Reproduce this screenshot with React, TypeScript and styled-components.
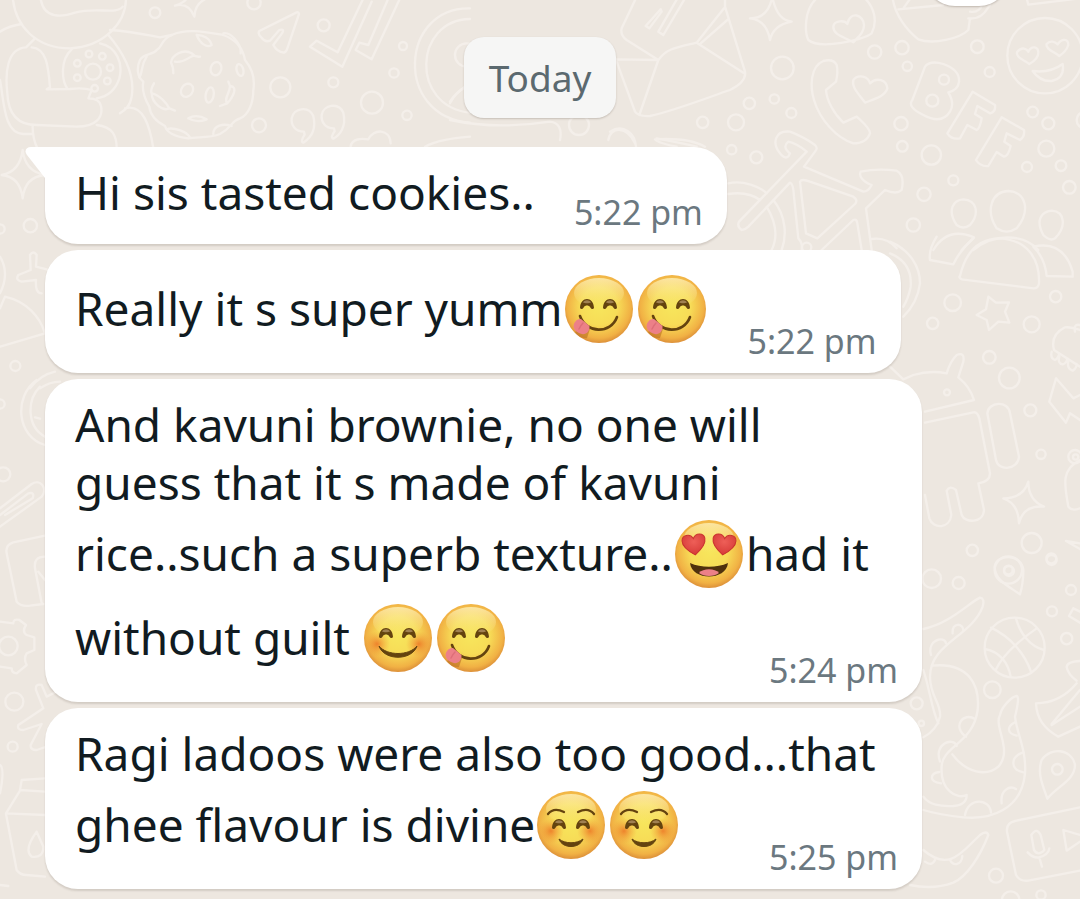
import React from 'react';
import styled, { createGlobalStyle } from 'styled-components';

const GlobalStyle = createGlobalStyle`
  body {
    margin: 0;
    background: #ede7e0;
    font-family: "Noto Sans", "Open Sans", sans-serif;
  }
`;

const Page = styled.main`
  position: relative;
  box-sizing: border-box;
  min-height: 100vh;
  padding: 37px 158px 10px 45px;
  overflow: hidden;
`;

const WallpaperArt = styled.svg`
  position: absolute;
  inset: 0;
  width: 100%;
  height: 100%;
  fill: none;
  stroke: #f4efea;
  stroke-width: 7;
  stroke-linecap: round;
  stroke-linejoin: round;
`;

const ReactionPill = styled.div`
  position: absolute;
  top: -54px;
  right: 71px;
  width: 84px;
  height: 60px;
  border-radius: 30px;
  background: #fff;
  box-shadow: 0 1px 2px rgba(60, 45, 30, 0.25);
`;

const DayRow = styled.header`
  position: relative;
  display: flex;
  justify-content: center;
  margin: 0 -158px 29px -45px;
`;

const DayChip = styled.time`
  padding: 0 25px;
  border-radius: 20px;
  background: #f6f6f5;
  color: #5b696f;
  font-size: 37px;
  line-height: 81px;
  box-shadow: 0 1px 2px rgba(60, 45, 30, 0.22);
`;

const MessageList = styled.ol`
  position: relative;
  display: flex;
  flex-direction: column;
  align-items: flex-start;
  gap: 6px;
  margin: 0;
  padding: 0;
  list-style: none;
`;

const Bubble = styled.li<{ $first?: boolean }>`
  position: relative;
  display: flex;
  flex-direction: column;
  box-sizing: border-box;
  max-width: 100%;
  padding: 16px 24px 12px 30px;
  border-radius: ${(p) => (p.$first ? '0 33px 33px 33px' : '33px')};
  background: #fff;
  box-shadow: 0 2px 2px rgba(60, 45, 30, 0.14);
`;

const Tail = styled.svg`
  position: absolute;
  top: 0;
  left: -20px;
  width: 21px;
  height: 32px;
  fill: #fff;
`;

const MessageText = styled.p`
  margin: 0;
  color: #111b21;
  font-size: 46px;
  line-height: 58px;
`;

const TimeSpace = styled.span`
  display: inline-block;
  width: 168px;
`;

const SentAt = styled.time`
  align-self: flex-end;
  margin-top: -29px;
  color: #6b7880;
  font-size: 34px;
  line-height: 40px;
`;

const Face = styled.svg`
  width: 73px;
  height: 70px;
  margin: 8px 0 6px;
  vertical-align: -24px;
`;

type FaceKind = 'yum' | 'love' | 'blush' | 'calm';

const faceLabels: Record<FaceKind, string> = {
  yum: '😋',
  love: '😍',
  blush: '😊',
  calm: '☺️',
};

const SmilingEye = ({ x, y }: { x: number; y: number }) => (
  <g transform={`translate(${x} ${y})`}>
    <path d="M-7 4C-6.500-8 6.500-8 7 4C6 6 4 5 3 3C2 1-2 1-3 3C-4 5-6 6-7 4Z" fill="#64430f" />
    <path d="M-4-1.500C-2.500-4.500 2.500-4.500 4-1.500C2-.5-2-.5-4-1.500Z" fill="#a08052" />
  </g>
);

const Heart = ({ x, y, turn }: { x: number; y: number; turn: number }) => (
  <path
    transform={`translate(${x} ${y}) rotate(${turn})`}
    d="M0 11C-7 6-12 1-11.500-4.500C-11-10-3-11.500 0-5.500C3-11.500 11-10 11.500-4.500C12 1 7 6 0 11Z"
    fill="url(#heartRed)"
    stroke="#c9332f"
    strokeWidth="1"
  />
);

const Emoji = ({ kind }: { kind: FaceKind }) => (
  <Face viewBox="0 0 73 70" role="img" aria-label={faceLabels[kind]}>
    <circle cx="36" cy="35" r="34" fill="url(#faceSkin)" />
    <ellipse cx="36" cy="19" rx="25" ry="15" fill="url(#faceShine)" />
    {(kind === 'blush' || kind === 'calm') && (
      <>
        <circle cx={kind === 'blush' ? 15 : 16} cy="41" r="13" fill="url(#cheek)" />
        <circle cx={kind === 'blush' ? 57 : 55} cy="41" r="13" fill="url(#cheek)" />
      </>
    )}
    {kind === 'yum' && (
      <>
        <SmilingEye x={24} y={30} />
        <SmilingEye x={47} y={30} />
        <path d="M17 42C23 60 48 60 54 43" fill="none" stroke="#64430f" strokeWidth="2.600" strokeLinecap="round" />
        <path d="M12 58C14 62 20 65 24 64L27 55L20 52Z" fill="#bf7427" opacity=".65" />
        <path d="M18 45L26.500 52C27 59 21 62 16 59C11 57 9 52 12 48C14 45 16 45 18 45Z" fill="#ec8088" />
        <path d="M20 49C18 51 17 53 16 55" fill="none" stroke="#dd6e79" strokeWidth="1.500" strokeLinecap="round" />
      </>
    )}
    {kind === 'blush' && (
      <>
        <SmilingEye x={24} y={30} />
        <SmilingEye x={47} y={30} />
        <path d="M17 43C25 53 47 53 55 43C50 58 22 58 17 43Z" fill="#64430f" stroke="#64430f" strokeLinejoin="round" />
      </>
    )}
    {kind === 'calm' && (
      <>
        <SmilingEye x={24} y={34} />
        <SmilingEye x={48} y={34} />
        <path d="M13 24C17 19 23 19 29 22M43 22C49 19 55 19 59 24" fill="none" stroke="#64430f" strokeWidth="2.300" strokeLinecap="round" />
        <path d="M24 49C30 54 42 54 48 49C45 59 27 59 24 49Z" fill="#64430f" stroke="#64430f" strokeLinejoin="round" />
      </>
    )}
    {kind === 'love' && (
      <>
        <Heart x={21} y={25} turn={-7} />
        <Heart x={51} y={25} turn={7} />
        <path d="M17 44C28 49 44 49 55 44C53 62 19 62 17 44Z" fill="#4f310d" />
        <path d="M26 54C30 49 42 49 46 54C41 58 31 58 26 54Z" fill="#ec8088" />
      </>
    )}
  </Face>
);

type Dot = [number, number, number];

const Dots = ({ at }: { at: Dot[] }) => (
  <>
    {at.map(([x, y, r]) => (
      <circle key={`${x}-${y}`} cx={x} cy={y} r={r} />
    ))}
  </>
);

const Wallpaper = () => (
  <WallpaperArt viewBox="0 0 1080 899" preserveAspectRatio="xMidYMin slice" aria-hidden="true">
    <defs>
      <radialGradient id="faceSkin" cx=".5" cy=".46" r=".55">
        <stop offset="0" stopColor="#f7e65c" />
        <stop offset=".5" stopColor="#f7dc57" />
        <stop offset=".85" stopColor="#f1b144" />
        <stop offset="1" stopColor="#da8c38" />
      </radialGradient>
      <linearGradient id="faceShine" x1="0" y1="0" x2="0" y2="1">
        <stop offset="0" stopColor="#fff3c0" stopOpacity=".75" />
        <stop offset="1" stopColor="#fbe98a" stopOpacity="0" />
      </linearGradient>
      <radialGradient id="cheek">
        <stop offset="0" stopColor="#ec7022" stopOpacity=".8" />
        <stop offset="1" stopColor="#f09a3a" stopOpacity="0" />
      </radialGradient>
      <radialGradient id="heartRed" cx=".5" cy=".35" r=".65">
        <stop offset="0" stopColor="#ee5f58" />
        <stop offset="1" stopColor="#d63a37" />
      </radialGradient>
    </defs>

    {/* astronaut, cookie, paper plane, ticks and quotes */}
    <g transform="scale(.33333)">
      <path d="M38-10C45 80 110 145 210 145C310 140 380 70 378-10M122-5C130 60 190 50 225 38C290 20 350 45 368 20M0 95C20 82 45 75 65 72M105 115L78 142C20 145 15 220 22 280C25 350 60 375 110 375L230 380C290 380 310 350 303 318C300 300 285 295 265 295L275 270Q250 262 210 267L140 268L150 262C145 200 140 145 95 142" />
      <path d="M0 240C12 300 10 400 70 402L98 402M98 375C97 410 105 430 112 445M290 375C340 380 350 410 350 445M325 105C380 170 405 230 395 290C390 320 375 330 360 340M375 325C430 310 450 380 460 445M215 148C180 180 185 240 202 266M300 130C350 140 370 190 358 235C345 275 320 290 290 295M330 90C400 95 440 105 480 112L515 105" />
      <path d="M515 105C560 85 610 95 670 105C710 120 730 150 735 180C760 210 765 240 760 270C760 310 745 345 720 355C690 365 700 380 660 402C630 415 590 410 565 415C520 410 500 395 495 378C460 360 450 340 448 320C430 290 425 270 430 245C410 230 410 200 420 180C430 160 460 165 470 150C490 140 480 120 515 105Z" />
      <path d="M590 105C600 130 620 145 635 135C630 115 610 105 590 105M670 100C690 95 725 130 722 160M440 170C420 200 430 215 418 232M600 170Q585 172 575 160C550 145 515 165 513 188Q520 200 520 220M525 185C550 190 560 175 578 168M462 250Q450 270 455 280C480 285 500 310 508 325L525 332M455 280C455 310 490 335 508 325M685 245L690 258C715 260 700 290 682 310L660 318M690 258C690 280 670 295 682 310M500 388C520 380 560 395 570 412M640 402C640 375 670 370 695 378M565 355Q590 340 620 358Q590 370 565 355" />
      <path d="M525 17C550 10 560 0 570-20M525 17Q565 5 583 50Q585 10 620-5M890 37L778 93Q772 102 784 112Q795 128 810 122L838 90Q855 85 846 100L820 135Q830 155 852 158Q860 155 862 145L897 42Q897 36 890 37ZM1090-5L1013 157L950 122L930 140L1027 200L1115 5M1165-5L1105 135L1078 128L1067 150L1115 178L1200-5" />
      <ellipse cx="648" cy="206" rx="16" ry="20" transform="rotate(15 648 206)" />
      <ellipse cx="561" cy="271" rx="17" ry="21" transform="rotate(35 561 271)" />
      <ellipse cx="629" cy="285" rx="12" ry="23" transform="rotate(10 629 285)" />
      <ellipse cx="720" cy="210" rx="10" ry="18" transform="rotate(-15 720 210)" />
      <path d="M912 395C885 395 873 375 875 355C880 325 925 315 940 348C950 390 930 415 910 428Q900 425 914 404ZM1002 385C975 385 963 365 965 345C970 315 1015 305 1030 338C1040 380 1020 405 1000 416Q990 412 1004 394ZM1052 440C1055 415 1085 415 1105 418C1120 385 1170 385 1172 430M1275 440C1310 420 1360 415 1410 410M1410 25C1200 20 1180 350 1410 368M1410 57C1240 60 1230 320 1410 338M1350 310Q1365 280 1395 262" />
      <Dots at={[[465,38,16],[762,8,20],[971,76,18],[1209,138,12],[1182,219,14],[841,262,30],[1000,247,15],[1116,308,33],[1221,346,14],[777,376,21],[1400,165,35],[279,215,24],[267,162,10],[307,169,10],[232,190,10],[330,203,10],[232,233,10],[322,243,10],[284,265,10]]} />
    </g>

    {/* envelope, phone, lettering, bicycle and people */}
    <g transform="translate(610 0) scale(.33333)">
      <path d="M80-10L35 85Q30 105 50 120L145 180L20 178M20 185L75 335Q85 350 120 348C200 330 300 290 360 270Q410 245 405 215L345 20V-10M145 180C170 145 200 142 260 128L400 218M145 180L88 345M260 128L342 25M272 130L352 60M205-10L145 95L160 105L225-5M152 28L107 78L118 85L155 35ZM420 55Q475 55 487-10Q500 60 545 65Q490 75 480 120Q470 60 420 55Z" />
      <path d="M620-5C580 30 585 100 595 120C630 150 760 120 785 100C805 60 790 20 765-5M730 127C700 110 670 105 670 80C672 60 705 60 712 72C720 30 762 45 762 75C763 100 740 115 730 127ZM848-5C855 45 890 90 925 118C970 135 1050 115 1075 90L1080 55M865 28L1000 15M905-10L882 22M1075 55C1120 60 1130 25 1140 15M1080 35C1105 40 1115 20 1115 15M1250-5L1255 14L1410-5" />
      <path d="M680 195Q670 175 640 183C600 200 600 260 612 300C630 360 680 415 730 430Q770 430 780 400Q780 385 740 350L700 368C670 340 650 300 648 270L678 245Q685 215 680 195ZM765 308C740 275 725 260 730 240C745 220 775 230 780 250C800 230 830 240 832 265C825 290 790 298 765 308Z" />
      <path d="M945 200Q960 180 1000 192Q1050 210 1047 245Q1045 270 1015 277Q1035 310 1020 335Q995 375 940 345Q890 320 907 300ZM1088 275L1155 315Q1158 335 1140 340L1102 318L1095 342L1115 355Q1110 385 1100 390L1072 375L1050 415Q1025 420 1012 400ZM1175 352L1242 390Q1245 410 1230 420L1190 400L1183 425L1202 438Q1195 468 1182 470L1160 456L1135 498Q1110 500 1098 480Z" />
      <circle cx="1305" cy="167" r="113" />
      <path d="M1258 192C1240 180 1215 170 1222 155C1235 140 1250 145 1255 155C1265 135 1285 140 1285 158C1285 175 1270 185 1258 192ZM1348 168C1330 155 1305 145 1310 132C1320 120 1335 125 1343 133C1355 115 1375 115 1375 135C1370 150 1360 160 1348 168ZM1268 213Q1320 220 1358 192Q1365 235 1325 243Q1290 245 1268 213Z" />
      <path d="M0 395C40 370 75 400 78 440M200 440C170 435 140 425 135 418C190 415 250 420 285 440M387 665Q380 680 395 690Q405 690 415 680L540 548Q550 550 552 590L565 715C580 730 575 745 575 750M387 665L590 455Q560 430 535 425Q515 440 540 460Q530 485 510 460C485 430 495 390 540 395Q580 410 615 435Q625 445 615 455L582 500L760 575Q775 575 785 555C760 545 745 530 752 515Q800 505 860 512Q885 525 875 570Q860 585 825 570L768 625L785 750M570 545Q575 535 600 545L730 590Q745 600 735 612L622 715L588 700ZM635 750L730 660Q740 655 742 670L755 750M355 550C400 540 450 560 470 580M355 582C400 575 430 585 450 600M490 600C530 650 530 710 515 750M470 620C500 670 505 710 485 750M785 717Q830 710 860 745" />
      <path d="M1060 598C1100 600 1110 640 1080 675Q1060 690 1040 675C1010 630 1030 600 1060 598ZM1195 573C1245 575 1265 630 1220 685Q1190 705 1160 685C1125 630 1145 575 1195 573ZM1325 632C1365 635 1370 680 1335 715Q1320 725 1300 705C1275 660 1295 635 1325 632ZM970 750C1000 700 1040 690 1092 712L1055 750M1090 750C1150 700 1240 700 1285 750" />
      <Dots at={[[517,204,34],[794,156,20],[876,143,20],[892,199,14],[1102,140,19],[1139,216,15],[1002,239,15],[967,302,18],[418,310,17],[493,297,14],[544,339,15],[278,367,17],[378,367,24],[365,449,14],[439,472,18],[873,371,20],[877,439,16],[964,465,29],[1268,336,16],[1315,370,18],[1309,446,24],[1353,497,16],[1251,501,15],[1030,541,15],[942,583,20],[910,675,20],[1378,562,19],[1425,360,25],[590,742,14]]} />
    </g>

    {/* robot, stars and lightning */}
    <g transform="translate(890 240) scale(.33333)">
      <path d="M140-10Q115 30 120 60L190 73Q210 30 250-5M210 108Q205 112 215 118L430 145Q445 145 447 130C450 55 410 0 330-5C260-5 225 45 210 108ZM430 20Q520 0 548 95V110L470 108Q465 55 430 20ZM0 5C60 30 90 80 90 130C85 170 70 200 40 230M0 40C50 60 65 100 62 140Q55 175 40 200M0 380L40 418L70 405Q120 390 170 400Q180 365 200 345Q225 335 220 365L205 412Q240 440 252 480L105 515M105 548L250 517Q262 515 268 535L300 700Q300 725 265 730L282 810C280 850 225 850 215 825L198 750Q180 735 170 752L184 825C180 865 130 870 118 835L105 765" />
      <path d="M292 520C295 485 355 480 360 520L387 650C385 690 325 695 318 660ZM295 170L318 188L357 187L345 215L358 248L325 245L297 270L290 240L260 225L288 208ZM415 725Q415 780 462 800Q400 795 387 850Q385 790 340 775Q400 775 415 725ZM570 270Q545 260 525 262Q480 285 492 330L570 380M555 275Q550 250 570 255M485 335Q480 355 495 360Q505 355 508 340M508 350Q502 370 518 373Q530 370 532 355M535 365Q530 385 548 392Q560 385 560 372M570 465L550 475L498 415L478 485L528 548L540 520L570 540M570 660C510 690 525 740 535 800Q545 815 570 805M528 903L570 910M528 903L570 927" />
      <Dots at={[[188,188,25],[128,250,17],[425,253,24],[497,170,17],[298,352,19],[358,414,31],[421,511,18],[453,643,14],[247,931,17],[425,909,30],[484,955,15],[171,457,9],[355,990,41],[355,990,13],[555,650,20],[557,651,8]]} />
    </g>

    {/* octopus, ball, pins and camera card */}
    <g transform="translate(890 560) scale(.33333)">
      <path d="M100 207C180 190 235 130 270 113Q285 115 278 140C245 230 120 250 120 350C120 410 155 430 150 470Q140 510 100 532M100 330C120 390 125 450 145 490M125 317C240 305 270 380 263 450C250 550 155 560 155 620C150 690 200 720 230 705Q230 735 190 738C150 740 120 735 100 710M187 583C230 640 290 650 325 620C370 570 310 500 330 465C335 440 365 410 380 408Q390 410 375 470C380 520 410 570 405 640C395 750 300 780 220 772Q150 765 100 750M100 870C180 940 220 870 270 825Q290 810 295 825C270 890 230 950 190 968Q130 990 60 975" />
      <path d="M188 220C185 185 220 190 220 210M123 285C110 240 165 225 168 250M228 530C185 500 220 455 255 477M150 605C130 550 190 530 200 558M153 670C115 665 120 640 148 636M225 765C235 710 300 715 303 758M335 730C330 690 360 675 378 687M400 577C360 590 360 630 400 637M375 487C350 500 350 520 380 527M105 905Q125 920 135 900M180 900C190 920 215 915 217 888" />
      <circle cx="374" cy="263" r="90" />
      <path d="M303 203C360 230 405 280 424 338M378 175C390 220 420 260 462 270M440 205C390 240 340 280 317 330M285 267C330 275 355 310 362 350M390 103C350 75 315 60 314 20C320-20 395-20 400 30Q400 70 390 103ZM472 716C460 680 440 640 455 600C480 560 545 565 555 615C555 660 500 680 472 716ZM570 390L485 492M438 430Q440 495 505 530L570 500M438 430Q510 430 560 370M570 303Q530 305 530 322Q535 345 560 362M570 440L485 495M550 145L570 155M550 145L537 168L570 188M570 742L375 783Q345 790 352 820L378 945Q390 965 415 962L570 932M424 825Q440 800 452 825L463 870Q445 890 432 870ZM413 877Q430 895 447 892Q475 885 478 865M448 893L456 920M570 825L520 810L530 872L570 845" />
      <Dots at={[[125,56,28],[206,69,18],[357,33,15],[485,0,15],[543,90,15],[486,154,15],[530,236,17],[307,389,25],[80,430,18],[94,490,8],[502,628,16],[318,947,21],[362,1020,26],[453,1005,14]]} />
    </g>

    {/* left margin doodles */}
    <g transform="translate(0 130) scale(.33333)">
      <path d="M68 60Q75 125 135 135Q75 140 68 205Q60 140 5 135Q60 125 68 60ZM90 375Q100 360 110 375L108 410L140 418M90 375L92 420L55 435Q45 450 65 455L108 450Q105 490 125 490M0 380Q30 430 0 490M0 535L15 500C80 515 120 560 135 610L0 650M90 775Q120 735 165 725M120 775Q150 755 180 755" />
      <Dots at={[[91,287,20],[0,297,14],[46,708,15]]} />
    </g>
    <g transform="translate(0 380) scale(.33333)">
      <path d="M110 0C40 50 50 170 135 195M120 20C80 60 80 140 135 170M105 112L120 116M0 385L95 312C120 295 145 325 125 350L0 440M0 405L85 340Q105 335 98 355L15 405M135 467L40 487Q15 495 20 520L50 665Q60 680 90 677L130 672M135 530Q100 530 105 565L125 670M115 575L135 600M0 725L40 730Q40 715 58 720L78 735Q65 755 80 765L103 772V810L80 820Q70 835 80 855L50 880Q35 880 35 865L0 860M108 930Q105 910 125 915L140 950L170 935M108 930L130 985L55 1035Q50 1050 70 1050L125 1032L92 1095Q90 1110 110 1110L140 1100M0 1155Q15 1165 0 1240M135 1195L65 1200L60 1230L135 1235M60 1232L18 1300L135 1305M18 1302L50 1470Q60 1485 80 1485L135 1490M110 1355Q70 1410 95 1430Q130 1435 130 1400ZM0 1515L25 1518" />
      <Dots at={[[10,283,21],[25,798,28],[43,965,27],[38,1100,15],[0,72,14]]} />
    </g>

    <g transform="translate(450 20) scale(.33333)">
      <path d="M475 360C480 320 530 315 555 370M620 355Q700 370 740 380M0 300Q140 330 300 305Q340 310 330 360M0 245Q15 220 45 200" />
      <circle cx="387" cy="315" r="30" />
    </g>
  </WallpaperArt>
);

export default function App() {
  return (
    <Page>
      <GlobalStyle />
      <Wallpaper />
      <ReactionPill />
      <DayRow>
        <DayChip>Today</DayChip>
      </DayRow>
      <MessageList>
        <Bubble $first>
          <Tail viewBox="0 0 21 32" aria-hidden="true">
            <path d="M21 0H6C1 0-1 4 2 8L20 31H21Z" />
          </Tail>
          <MessageText>
            Hi sis tasted cookies..
            <TimeSpace />
          </MessageText>
          <SentAt>5:22 pm</SentAt>
        </Bubble>
        <Bubble>
          <MessageText>
            Really it s super yumm
            <Emoji kind="yum" />
            <Emoji kind="yum" />
            <TimeSpace />
          </MessageText>
          <SentAt>5:22 pm</SentAt>
        </Bubble>
        <Bubble>
          <MessageText>
            And kavuni brownie, no one will guess that it s made of kavuni rice..such a superb texture..
            <Emoji kind="love" />
            had it without guilt <Emoji kind="blush" />
            <Emoji kind="yum" />
            <TimeSpace />
          </MessageText>
          <SentAt>5:24 pm</SentAt>
        </Bubble>
        <Bubble>
          <MessageText>
            Ragi ladoos were also too good...that ghee flavour is divine
            <Emoji kind="calm" />
            <Emoji kind="calm" />
            <TimeSpace />
          </MessageText>
          <SentAt>5:25 pm</SentAt>
        </Bubble>
      </MessageList>
    </Page>
  );
}
